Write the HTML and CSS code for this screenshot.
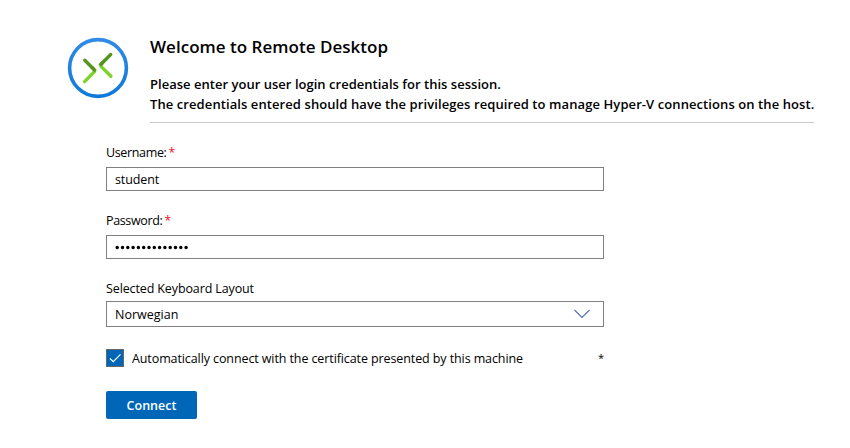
FILE: index.html
```
<!DOCTYPE html>
<html lang="en">
<head>
<meta charset="utf-8">
<title>Remote Desktop</title>
<link rel="stylesheet" href="styles.css">
</head>
<body>
<header class="header">
  <svg class="logo" viewBox="0 0 62 62" aria-hidden="true">
    <defs>
      <linearGradient id="ring" x1="0" y1="0" x2="0" y2="1"><stop offset="0" stop-color="#2f8ae8"/><stop offset="1" stop-color="#0f7ad9"/></linearGradient>
    </defs>
    <circle cx="31" cy="31" r="28.400" fill="#fff" stroke="url(#ring)" stroke-width="3.600"/>
    <g fill="none" stroke-width="3.400">
      <path stroke="#7ed32b" stroke-linecap="round" d="M17.600 44.600 27.500 34.600"/>
      <path stroke="#55951e" stroke-linecap="round" d="M17.800 23.300 26.500 32"/>
      <path stroke="#55951e" d="M25 30.500 28.600 34.100"/>
      <path stroke="#7ed32b" stroke-linecap="round" d="M43.900 39.300 34 29.400"/>
      <path stroke="#55951e" stroke-linecap="round" d="M43.700 17.500 34.500 26.700"/>
      <path stroke="#55951e" d="M36 25.200 32.700 28.500"/>
    </g>
  </svg>
  <div class="intro">
    <h1 class="title">Welcome to Remote Desktop</h1>
    <p class="lead">Please enter your user login credentials for this session.<br><span class="lead-second">The credentials entered should have the privileges required to manage Hyper-V connections on the host.</span></p>
  </div>
</header>
<form class="form">
  <div class="field">
    <label class="label" for="user"><span class="user-label">Username:</span><span class="required">*</span></label>
    <input class="input" id="user" type="text" value="student">
  </div>
  <div class="field">
    <label class="label" for="pass"><span class="user-label">Password:</span><span class="required">*</span></label>
    <div class="input" id="pass"><svg width="76" height="6" viewBox="0 0 76 6"><path d="M2.200 3.500H72" fill="none" stroke="#000" stroke-width="3.500" stroke-linecap="round" stroke-dasharray="0 5.300"/></svg></div>
  </div>
  <div class="field">
    <div class="label"><span class="layout-label">Selected Keyboard Layout</span></div>
    <div class="input select"><span class="layout-value">Norwegian</span>
      <svg width="18" height="10" viewBox="0 0 18 10"><path d="M1.500 1 9 8.500 16.500 1" fill="none" stroke="#5a6fb8" stroke-width="1.200"/></svg>
    </div>
  </div>
  <div class="check-row">
    <span class="checkbox"><svg width="14" height="14" viewBox="0 0 14 14"><path d="M2 7.500 5.300 10.700 12.500 3.300" fill="none" stroke="#fff" stroke-width="1.200"/></svg></span>
    <span class="check-label">Automatically connect with the certificate presented by this machine</span>
    <span class="star">*</span>
  </div>
  <button class="connect" type="button">Connect</button>
</form>
</body>
</html>
```
FILE: styles.css
```
* { box-sizing: border-box; }
body { margin: 0; background: #fff; color: #000; font: 12.5px/20px "Open Sans", "Noto Sans", sans-serif; }
.header { display: flex; padding: 37px 0 0 67px; height: 123px; }
.logo { width: 62px; height: 62px; flex: none; }
.intro { width: 664px; margin-left: 21px; height: 86px; border-bottom: 1px solid #c8c8c8; white-space: nowrap; }
.title { margin: -3px 0 0; font-size: 17px; line-height: 26px; font-weight: 600; letter-spacing: 0.02px; }
.lead { margin: 14px 0 0; font-size: 13px; line-height: 20px; font-weight: 600; letter-spacing: 0.02px; }
.lead-second { letter-spacing: 0.085px; }
.form { width: 498px; margin: 20px 0 0 106px; }
.field { height: 68px; }
.label { display: flex; height: 24px; line-height: 20px; }
.user-label { letter-spacing: -0.35px; }
.layout-label { letter-spacing: -0.12px; }
.required { color: #e81123; margin-left: 2px; font-size: 12px; }
.input { display: flex; align-items: center; width: 100%; height: 24px; padding: 0 8px; border: 1px solid #808080; background: #fff; color: #000; font: inherit; letter-spacing: -0.1px; outline: 0; }
.select { height: 26px; margin-top: -2px; justify-content: space-between; padding-right: 12px; }
.layout-value { padding-top: 2px; letter-spacing: 0; }
.check-row { display: flex; align-items: center; height: 20px; margin-top: 1px; }
.checkbox { width: 18px; height: 18px; margin-right: 8px; border: 1px solid #666; background: #0067b8; display: flex; align-items: center; justify-content: center; }
.check-label { padding-top: 2px; letter-spacing: -0.1px; }
.star { margin-left: auto; font-size: 11px; }
.connect { display: block; width: 91px; height: 28px; margin-top: 23px; padding: 2px 0 0; border: 0; border-radius: 2px; background: #0067b8; color: #fff; font: 600 12.5px/26px "Open Sans", sans-serif; }
```
